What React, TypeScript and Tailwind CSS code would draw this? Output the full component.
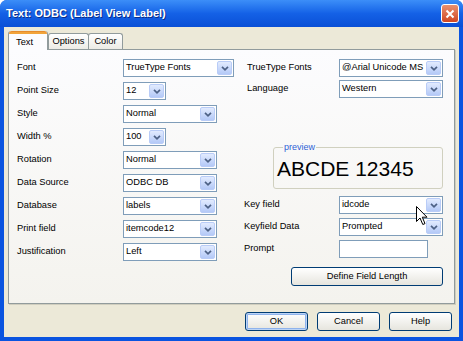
import React from 'react'

const Chevron = () => (
  <svg width="8" height="5" viewBox="0 0 8 5">
    <path d="M1 0.8 L4 3.8 L7 0.8" fill="none" stroke="#4D6185" strokeWidth="1.7" />
  </svg>
)

const Combo = ({ value, w }: { value: string; w: string }) => (
  <div className={`${w} h-[18px] shrink-0 bg-white border border-[#7F9DB9] flex items-center`}>
    <span className="flex-1 pl-[2px] whitespace-nowrap overflow-hidden">{value}</span>
    <div className="w-[15px] h-[14px] mr-px shrink-0 rounded-[2px] border border-[#B9CCF7] bg-linear-to-b from-[#E2EBFE] to-[#B4C9F7] flex items-center justify-center">
      <Chevron />
    </div>
  </div>
)

const Row = ({ label, lw, children }: { label: string; lw: string; children: React.ReactNode }) => (
  <div className="flex items-center h-[18px]">
    <span className={`${lw} shrink-0`}>{label}</span>
    {children}
  </div>
)

const Button = ({ label, w, primary }: { label: string; w: string; primary?: boolean }) => (
  <div
    className={`${w} h-[19px] rounded-[3px] border border-[#003C74] bg-linear-to-b from-[#FFFFFF] to-[#E6E5DE] flex items-center justify-center ${
      primary ? 'shadow-[inset_0_0_0_1px_#BCD4F6,inset_0_0_0_2px_#8FB3EC]' : ''
    }`}
  >
    {label}
  </div>
)

const leftRows: [string, string, string][] = [
  ['Font', 'TrueType Fonts', 'w-[111px]'],
  ['Point Size', '12', 'w-[43px]'],
  ['Style', 'Normal', 'w-[94px]'],
  ['Width %', '100', 'w-[43px]'],
  ['Rotation', 'Normal', 'w-[94px]'],
  ['Data Source', 'ODBC DB', 'w-[94px]'],
  ['Database', 'labels', 'w-[94px]'],
  ['Print field', 'itemcode12', 'w-[94px]'],
  ['Justification', 'Left', 'w-[94px]'],
]

export default function App() {
  return (
    <div className="relative w-[463px] h-[341px] font-['Liberation_Sans',Arial,sans-serif] text-[9.3px] text-black bg-[#0A54E0] rounded-t-[7px] flex flex-col overflow-hidden">
      {/* title bar */}
      <div className="h-[27px] shrink-0 flex items-center pl-[6px] pr-[4px] bg-linear-to-b from-[#3C8EF8] via-[#1461E6] to-[#0A4FD6]">
        <span className="flex-1 text-white font-bold text-[11px] [text-shadow:1px_1px_0_#0A2D8A]">
          Text: ODBC (Label View Label)
        </span>
        <div className="w-[18px] h-[19px] rounded-[3px] border border-white bg-linear-to-b from-[#E9906F] to-[#D0451F] flex items-center justify-center">
          <svg width="10" height="10" viewBox="0 0 10 10">
            <path d="M1.5 1.5 L8.5 8.5 M8.5 1.5 L1.5 8.5" stroke="white" strokeWidth="2" />
          </svg>
        </div>
      </div>

      {/* body */}
      <div className="flex-1 mx-[4px] mb-[4px] bg-[#ECE9D8] flex flex-col">
        {/* tabs */}
        <div className="flex items-end pl-[4px] pt-[4px] h-[22px] shrink-0">
          <div className="relative z-10 w-[40px] h-[19px] -mb-px bg-[#FCFCFE] border border-b-0 border-[#919B9C] border-t-0 rounded-t-[3px] flex flex-col">
            <div className="h-[3px] bg-[#F2A43A] rounded-t-[3px] border-t border-[#E68B2C]" />
            <span className="pl-[7px] pt-[2px]">Text</span>
          </div>
          <div className="w-[41px] h-[16px] bg-linear-to-b from-[#FFFFFF] to-[#ECEBE5] border border-b-0 border-[#919B9C] rounded-t-[3px] flex items-center justify-center whitespace-nowrap">
            Options
          </div>
          <div className="w-[35px] h-[16px] -ml-px bg-linear-to-b from-[#FFFFFF] to-[#ECEBE5] border border-b-0 border-[#919B9C] rounded-t-[3px] flex items-center justify-center">
            Color
          </div>
        </div>

        {/* tab page */}
        <div className="mx-[4px] h-[255px] shrink-0 border border-[#919B9C] bg-linear-to-b from-[#FCFCFE] to-[#F4F3EE] shadow-[1px_1px_0_#D0CEBF] flex">
          <div className="w-[235px] pl-[8px] pt-[9px] flex flex-col gap-[5px]">
            {leftRows.map(([label, value, w]) => (
              <Row key={label} label={label} lw="w-[106px]">
                <Combo value={value} w={w} />
              </Row>
            ))}
          </div>

          <div className="flex-1 pt-[9px] flex flex-col">
            <Row label="TrueType Fonts" lw="w-[95px] pl-[3px]">
              <Combo value="@Arial Unicode MS" w="w-[104px]" />
            </Row>
            <div className="mt-[3px]">
              <Row label="Language" lw="w-[95px] pl-[3px]">
                <Combo value="Western" w="w-[104px]" />
              </Row>
            </div>

            <fieldset className="ml-[29px] mt-[45px] w-[170px] h-[46px] border border-[#D0D0BF] rounded-[3px] px-[2px]">
              <legend className="ml-[7px] px-[1px] text-[9px] text-[#2F5FD6] leading-[9px]">preview</legend>
              <div className="text-[21px] leading-[24px] pl-[1px] mt-[5px]">ABCDE 12345</div>
            </fieldset>

            <div className="mt-[7px] flex flex-col gap-[4px]">
              <Row label="Key field" lw="w-[95px]">
                <Combo value="idcode" w="w-[104px]" />
              </Row>
              <Row label="Keyfield Data" lw="w-[95px]">
                <Combo value="Prompted" w="w-[104px]" />
              </Row>
              <Row label="Prompt" lw="w-[95px]">
                <div className="w-[89px] h-[18px] bg-white border border-[#7F9DB9]" />
              </Row>
            </div>

            <div className="mt-[9px] ml-[47px]">
              <Button label="Define Field Length" w="w-[152px]" />
            </div>
          </div>
        </div>

        {/* dialog buttons */}
        <div className="mt-[8px] pr-[7px] flex justify-end gap-[9px]">
          <Button label="OK" w="w-[63px]" primary />
          <Button label="Cancel" w="w-[63px]" />
          <Button label="Help" w="w-[63px]" />
        </div>
      </div>

      {/* mouse cursor */}
      <svg className="absolute left-[416px] top-[206px]" width="13" height="20" viewBox="0 0 13 20">
        <path d="M0.5 0.5 L0.5 15.5 L4 12 L6.8 18.5 L9 17.6 L6.3 11.2 L11 11.2 Z" fill="white" stroke="black" strokeWidth="1" />
      </svg>
    </div>
  )
}
